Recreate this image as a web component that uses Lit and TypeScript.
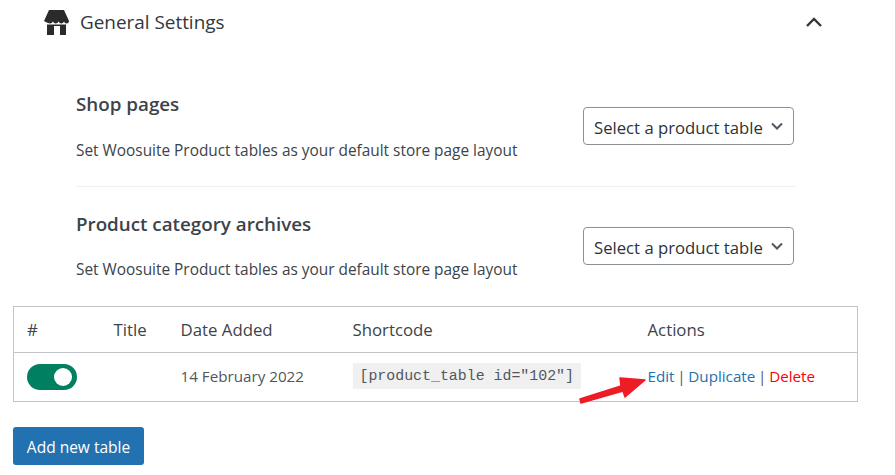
import { LitElement, html, css } from "lit";
import { customElement } from "lit/decorators.js";

@customElement("app-root")
export class AppRoot extends LitElement {
  static styles = css`
    :host { display: block; position: relative; width: 895px; height: 475px; overflow: hidden; background: #fff;
      font-family: "Open Sans", "Noto Sans", sans-serif; color: #3c434a; font-size: 15px; }
    .head { display: flex; align-items: center; height: 44px; padding-left: 44px; }
    .head svg.store { width: 25px; height: 25px; margin: 1px 11px 0 0; }
    .head h2 { margin: 0; font-size: 18.9px; font-weight: 400; color: #32373c; flex: 1; line-height: 24px; }
    .head svg.chev { width: 18px; height: 12px; margin-right: 72px; }
    .section { margin-left: 76px; width: 720px; display: flex; align-items: flex-start; justify-content: space-between; }
    .section h3 { margin: 0; font-size: 18.8px; font-weight: 600; color: #3c434a; line-height: 24px; }
    .section p { margin: 25px 0 0; font-size: 15.4px; line-height: 20px; color: #3c434a; }
    .sel { display: flex; align-items: center; justify-content: space-between; box-sizing: border-box; width: 211px; height: 38px; margin-top: 15px;
      border: 1px solid #8c8f94; border-radius: 4px; padding: 2px 10px 0; font-size: 16.7px; color: #2c3338; margin-right: 2px; }
    .sel svg { width: 12px; height: 8px; margin-top: -3px; }
    .one { margin-top: 48px; padding-bottom: 25px; border-bottom: 1px solid #f0f0f1; }
    .two { margin-top: 25px; }
    .two p { margin-top: 24px; }
    table { margin: 26px 0 0 13px; width: 845px; box-sizing: border-box; border: 1px solid #c3c4c7; border-collapse: collapse; table-layout: fixed; }
    th { font-weight: 400; font-size: 16.8px; text-align: left; height: 45px; padding: 0 0 0 13px; color: #3c434a; border-bottom: 1px solid #c3c4c7; }
    td { height: 48px; padding: 0 0 0 13px; font-size: 15px; color: #50575e; }
    td.up { height: 46px; padding-bottom: 2px; }
    .date { font-size: 15.2px; }
    .acts { font-size: 15.2px; word-spacing: -1.2px; }
    .toggle { display: block; width: 50px; height: 26px; border-radius: 13px; background: #008060; position: relative; }
    .toggle::after { content: ""; position: absolute; right: 5px; top: 4px; width: 18px; height: 18px; border-radius: 50%; background: #fff; }
    code { display: inline-block; background: #f0f0f1; font-family: "Liberation Mono", "DejaVu Sans Mono", monospace; font-size: 14.9px; line-height: 26px; padding: 0 7px; color: #50575e; vertical-align: middle; }
    a { color: #2271b1; text-decoration: none; }
    a.del { color: #f00; }
    .btn { display: flex; align-items: center; justify-content: center; box-sizing: border-box; width: 131px; height: 38px; margin: 25px 0 0 13px; padding-top: 2px;
      background: #2271b1; color: #fff; border-radius: 3px; font-size: 15.5px; }
    .arrow { position: absolute; left: 575px; top: 372px; width: 75px; height: 32px; }
  `;
  render() {
    const sel = html`<div class="sel"><span>Select a product table</span>
      <svg viewBox="0 0 12 8"><path d="M1 1.5l5 5 5-5" fill="none" stroke="#50575e" stroke-width="2"/></svg></div>`;
    const desc = "Set Woosuite Product tables as your default store page layout";
    return html`
      <div class="head">
        <svg class="store" viewBox="0 0 25 25">
          <path fill="#2b2b2b" d="M5 0h15l5 11c0 1.500-1 2.500-2.300 2.500-1.200 0-2.300-.8-2.700-2-.4 1.200-1.500 2-2.700 2s-2.300-.8-2.700-2h-.2c-.4 1.200-1.500 2-2.700 2s-2.300-.8-2.700-2h-.2c-.4 1.200-1.500 2-2.700 2S2 12.500 0 11z"/>
          <path fill="#2b2b2b" d="M3 14.500h19V25h-6v-9h-6v9H3z"/>
        </svg>
        <h2>General Settings</h2>
        <svg class="chev" viewBox="0 0 18 12"><path d="M2 10l7-7 7 7" fill="none" stroke="#32373c" stroke-width="2.400"/></svg>
      </div>
      <div class="section one">
        <div><h3>Shop pages</h3><p>${desc}</p></div>${sel}
      </div>
      <div class="section two">
        <div><h3>Product category archives</h3><p>${desc}</p></div>${sel}
      </div>
      <table>
        <colgroup><col style="width:87px"/><col style="width:67px"/><col style="width:172px"/><col style="width:295px"/><col/></colgroup>
        <tr><th>#</th><th>Title</th><th>Date Added</th><th>Shortcode</th><th>Actions</th></tr>
        <tr>
          <td><span class="toggle"></span></td><td></td><td class="date up">14 February 2022</td>
          <td class="up"><code>[product_table id="102"]</code></td>
          <td class="acts up"><a>Edit</a> | <a>Duplicate</a> | <a class="del">Delete</a></td>
        </tr>
      </table>
      <div class="btn">Add new table</div>
      <svg class="arrow" viewBox="0 0 75 32"><path d="M5 27L46 14 45 6 70 8 50 25 48 19 6 31z" fill="#ee1c25" stroke="#ee1c25" stroke-width="1.500" stroke-linejoin="round"/></svg>
    `;
  }
}
